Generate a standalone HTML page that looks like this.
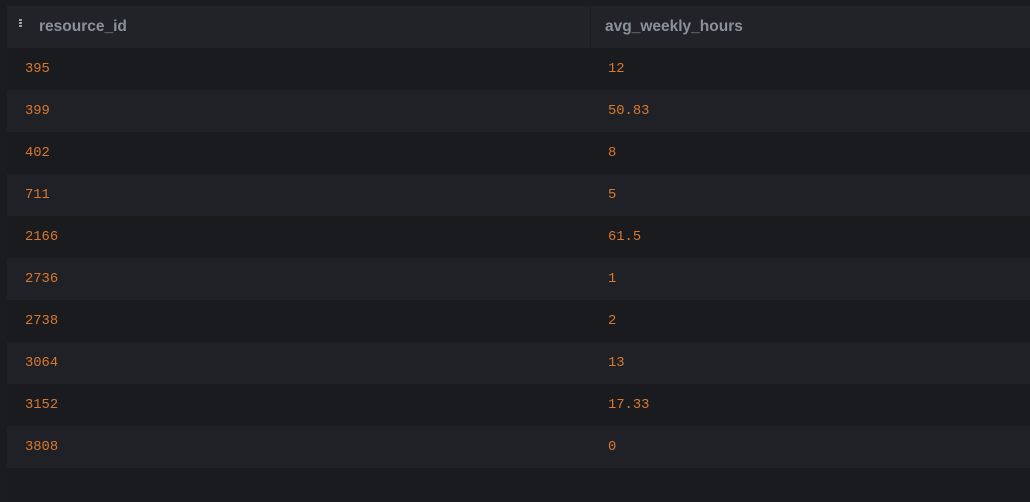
<!DOCTYPE html>
<html><head><style>
body{margin:0;width:1030px;height:502px;background:#1b1c20;overflow:hidden;position:relative;font-family:"Liberation Sans",sans-serif}
.t{position:absolute;left:7px;top:6px;width:1023px}
.r{height:42px;position:relative}
.h{background:#222328}
.r:nth-child(even){background:#1a1b1f}
.r:nth-child(odd):not(.h){background:#202126}
.h span{position:absolute;top:12px;font-weight:bold;font-size:15.5px;color:#8a919b}
.c{position:absolute;top:14px;font-family:"Liberation Mono",monospace;font-size:13.8px;color:#d9782f}
.div{position:absolute;left:583px;top:0;width:1px;height:42px;background:#1c1d21}
.ic{position:absolute;left:12px;top:13px;width:3px}
.ic i{display:block;width:3px;height:2px;background:#9aa0a8;margin-bottom:1px}
.bot{position:absolute;left:7px;top:468px;width:1023px;height:34px;background:#1a1b1f}
</style></head><body>
<div class="t">
<div class="r h"><div class="ic"><i></i><i></i><i></i></div><span style="left:32px">resource_id</span><div class="div"></div><span style="left:598px">avg_weekly_hours</span></div>
<div class="r"><span class="c" style="left:18px">395</span><span class="c" style="left:601px">12</span></div>
<div class="r"><span class="c" style="left:18px">399</span><span class="c" style="left:601px">50.83</span></div>
<div class="r"><span class="c" style="left:18px">402</span><span class="c" style="left:601px">8</span></div>
<div class="r"><span class="c" style="left:18px">711</span><span class="c" style="left:601px">5</span></div>
<div class="r"><span class="c" style="left:18px">2166</span><span class="c" style="left:601px">61.5</span></div>
<div class="r"><span class="c" style="left:18px">2736</span><span class="c" style="left:601px">1</span></div>
<div class="r"><span class="c" style="left:18px">2738</span><span class="c" style="left:601px">2</span></div>
<div class="r"><span class="c" style="left:18px">3064</span><span class="c" style="left:601px">13</span></div>
<div class="r"><span class="c" style="left:18px">3152</span><span class="c" style="left:601px">17.33</span></div>
<div class="r"><span class="c" style="left:18px">3808</span><span class="c" style="left:601px">0</span></div>
</div>
<div class="bot"></div>
</body></html>
